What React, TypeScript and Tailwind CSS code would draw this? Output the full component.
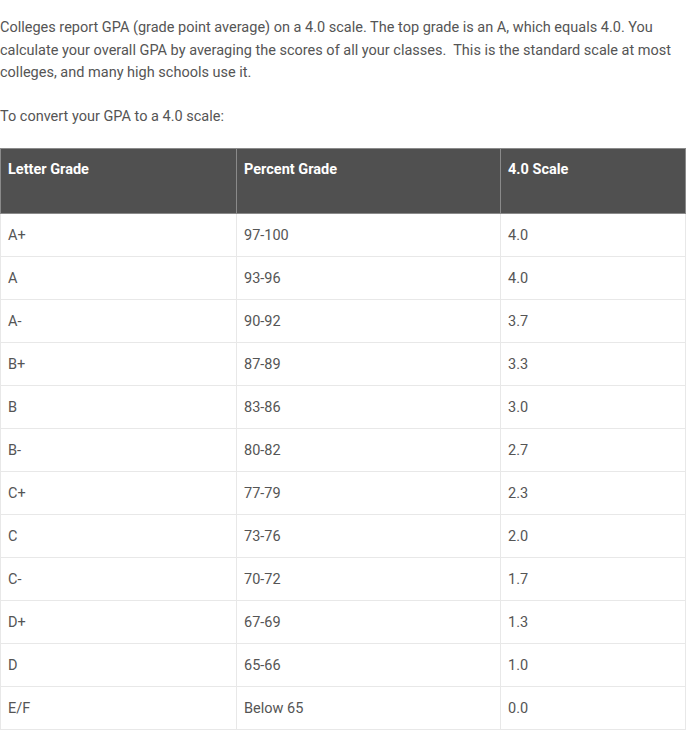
const rows: [string, string, string][] = [
  ["A+", "97-100", "4.0"],
  ["A", "93-96", "4.0"],
  ["A-", "90-92", "3.7"],
  ["B+", "87-89", "3.3"],
  ["B", "83-86", "3.0"],
  ["B-", "80-82", "2.7"],
  ["C+", "77-79", "2.3"],
  ["C", "73-76", "2.0"],
  ["C-", "70-72", "1.7"],
  ["D+", "67-69", "1.3"],
  ["D", "65-66", "1.0"],
  ["E/F", "Below 65", "0.0"],
];

const App = () => {
  return (
    <div className="w-[685px] bg-white pt-[17px] font-['Roboto',sans-serif] text-[14.5px] leading-[22.5px] text-[#555]">
      <p>
        Colleges report GPA (grade point average) on a 4.0 scale. The top grade is an A, which equals 4.0. You
        calculate your overall GPA by averaging the scores of all your classes.&nbsp; This is the standard scale at most
        colleges, and many high schools use it.
      </p>
      <p className="mt-[21px]">To convert your GPA to a 4.0 scale:</p>
      <table className="mt-[20px] w-[685px] table-fixed border-collapse">
        <colgroup>
          <col className="w-[236px]" />
          <col className="w-[264px]" />
          <col className="w-[185px]" />
        </colgroup>
        <thead>
          <tr className="h-[65px] bg-[#505050] text-left align-top font-bold text-white">
            <th className="border border-[#8a8a8a] px-[7px] pt-[10px]">Letter Grade</th>
            <th className="border border-[#8a8a8a] px-[7px] pt-[10px]">Percent Grade</th>
            <th className="border border-[#8a8a8a] px-[7px] pt-[10px]">4.0 Scale</th>
          </tr>
        </thead>
        <tbody>
          {rows.map(([letter, pct, scale]) => (
            <tr key={letter} className="h-[43px] align-middle">
              <td className="border border-[#e8e8e8] px-[7px] pt-[2px]">{letter}</td>
              <td className="border border-[#e8e8e8] px-[7px] pt-[2px]">{pct}</td>
              <td className="border border-[#e8e8e8] px-[7px] pt-[2px]">{scale}</td>
            </tr>
          ))}
        </tbody>
      </table>
    </div>
  );
};

export default App;
